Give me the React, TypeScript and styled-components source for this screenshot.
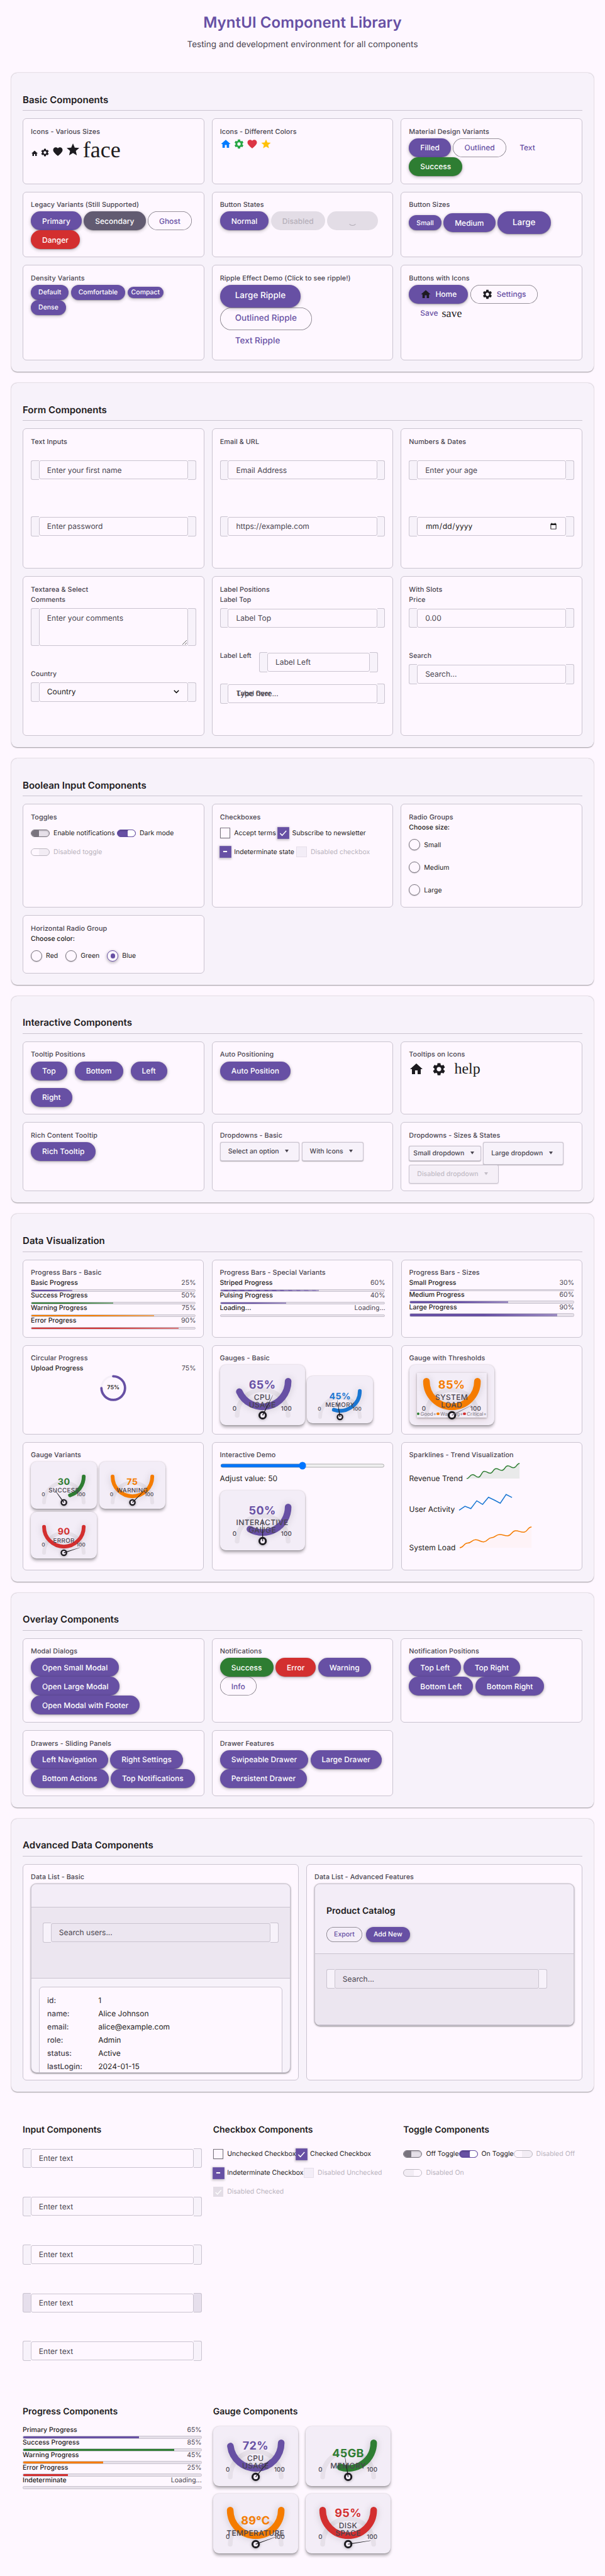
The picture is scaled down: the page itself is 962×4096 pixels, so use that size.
import React from 'react';
import styled, { createGlobalStyle, css } from 'styled-components';

const c = {
  primary: '#6750A4',
  secondary: '#625B71',
  success: '#2E7D32',
  danger: '#D32F2F',
  warning: '#F57C00',
  info: '#1976D2',
  bg: '#FEF7FF',
  surface: '#F7F2FA',
  surfaceHigh: '#F3EDF7',
  surfaceHigher: '#ECE6F0',
  track: '#E6E0E9',
  line: '#CAC4D0',
  outline: '#79747E',
  text: '#1D1B20',
  muted: '#49454F',
};
const level1 = '0 1px 2px rgba(0,0,0,.3), 0 1px 3px 1px rgba(0,0,0,.15)';
const level2 = '0 1px 2px rgba(0,0,0,.3), 0 2px 6px 2px rgba(0,0,0,.15)';

const Global = createGlobalStyle`
  html, body { margin: 0; background: ${c.bg}; overflow: hidden; }
  *, *::before, *::after { box-sizing: border-box; }
  button, input, select, textarea { font-family: inherit; }
`;

const Page = styled.div`
  zoom: 0.7513;
  width: 100%;
  height: 5452px;
  overflow: hidden;
  padding: 0 24px;
  background: ${c.bg};
  color: ${c.text};
  font-family: Inter, 'Liberation Sans', sans-serif;
  font-size: 16px;
  line-height: 20px;
  text-rendering: geometricPrecision;
`;

const Header = styled.header`
  height: 154.5px;
  padding-top: 28px;
  text-align: center;
`;
const Title = styled.h1`
  margin: 0;
  font-size: 32px;
  line-height: 40px;
  font-weight: 600;
  letter-spacing: 0.1px;
  color: ${c.primary};
`;
const Subtitle = styled.p`
  margin: 14px 0 0;
  font-size: 18px;
  line-height: 24px;
  color: ${c.muted};
`;

const Panel = styled.section`
  margin-bottom: 24px;
  padding: 24px;
  border-radius: 12px;
  background: ${c.surface};
  box-shadow: 0 1px 2px rgba(0, 0, 0, 0.3), 0 1px 3px rgba(0, 0, 0, 0.12);
`;
const PanelTitle = styled.h2`
  height: 38px;
  margin: 18px 0 16px;
  border-bottom: 1px solid ${c.line};
  font-size: 20px;
  line-height: 28px;
  font-weight: 600;
`;
const Grid = styled.div<{ $rows: string; $cols?: number }>`
  display: grid;
  grid-template-columns: repeat(${p => p.$cols ?? 3}, 1fr);
  grid-template-rows: ${p => p.$rows};
  gap: 16px;
`;
const CardBox = styled.div`
  padding: 16px;
  border: 1px solid ${c.line};
  border-radius: 8px;
  background: ${c.bg};
`;
const CardTitle = styled.h3`
  margin: 0.7px 0 4px;
  font-size: 14.4px;
  letter-spacing: 0.1px;
  line-height: 20px;
  font-weight: 500;
  color: ${c.muted};
`;
const Card = ({ title, children }: { title: string; children?: React.ReactNode }) => (
  <CardBox>
    <CardTitle>{title}</CardTitle>
    {children}
  </CardBox>
);

const Row = styled.div<{ $gap?: string; $align?: string }>`
  display: flex;
  flex-wrap: wrap;
  align-items: ${p => p.$align ?? 'center'};
  gap: ${p => p.$gap ?? '0 4.5px'};
`;

/* Buttons */
type Size = 'xs' | 's' | 'm' | 'l';
const sizes = {
  xs: css`height: 24px; padding: 0 8px; border-radius: 12px; font-size: 14px;`,
  s: css`height: 32px; padding: 0 16px; border-radius: 16px; font-size: 14px;`,
  m: css`height: 40px; padding: 0 24px; border-radius: 20px; font-size: 16px;`,
  l: css`height: 48px; padding: 0 32px; border-radius: 24px; font-size: 18px;`,
};
const Btn = styled.button<{ $size?: Size; $color?: string; $kind?: 'outlined' | 'text' | 'disabled' }>`
  display: inline-flex;
  align-items: center;
  justify-content: center;
  gap: 8px;
  border: 0;
  font-weight: 500;
  line-height: 20px;
  text-rendering: geometricPrecision;
  white-space: nowrap;
  color: #fff;
  background: ${p => p.$color ?? c.primary};
  box-shadow: ${level2};
  ${p => sizes[p.$size ?? 'm']}
  ${p => p.$kind === 'outlined' && css`background: transparent; color: ${c.primary}; box-shadow: inset 0 0 0 1px ${c.outline};`}
  ${p => p.$kind === 'text' && css`background: transparent; color: ${c.primary}; box-shadow: none;`}
  ${p => p.$kind === 'disabled' && css`background: #e3dde6; color: #b6b0ba; box-shadow: none;`}
`;
const Spinner = styled.span`
  width: 20px;
  height: 20px;
  margin: 2px 20px 0;
  border: 2px solid transparent;
  border-bottom-color: #b0abb4;
  border-radius: 50%;
`;

/* Icons */
const paths = {
  home: 'M10 20v-6h4v6h5v-8h3L12 3 2 12h3v8z',
  gear: 'M19.14 12.94c.04-.3.06-.61.06-.94 0-.32-.02-.64-.07-.94l2.03-1.58c.18-.14.23-.41.12-.61l-1.92-3.32c-.12-.22-.37-.29-.59-.22l-2.39.96c-.5-.38-1.03-.7-1.62-.94l-.36-2.54c-.04-.24-.24-.41-.48-.41h-3.84c-.24 0-.43.17-.47.41l-.36 2.54c-.59.24-1.13.57-1.62.94l-2.39-.96c-.22-.08-.47 0-.59.22L2.74 8.87c-.12.21-.08.47.12.61l2.03 1.58c-.05.3-.09.63-.09.94s.02.64.07.94l-2.03 1.58c-.18.14-.23.41-.12.61l1.92 3.32c.12.22.37.29.59.22l2.39-.96c.5.38 1.03.7 1.62.94l.36 2.54c.05.24.24.41.48.41h3.84c.24 0 .44-.17.47-.41l.36-2.54c.59-.24 1.13-.56 1.62-.94l2.39.96c.22.08.47 0 .59-.22l1.92-3.32c.12-.22.07-.47-.12-.61l-2.01-1.58zM12 15.6c-1.98 0-3.6-1.62-3.6-3.6s1.62-3.6 3.6-3.6 3.6 1.62 3.6 3.6-1.62 3.6-3.6 3.6z',
  heart: 'M12 21.35l-1.45-1.32C5.4 15.36 2 12.28 2 8.5 2 5.42 4.42 3 7.5 3c1.74 0 3.41.81 4.5 2.09C13.09 3.81 14.76 3 16.5 3 19.58 3 22 5.42 22 8.5c0 3.78-3.4 6.86-8.55 11.54L12 21.35z',
  star: 'M12 17.27L18.18 21l-1.64-7.03L22 9.24l-7.19-.61L12 2 9.19 8.63 2 9.24l5.46 4.73L5.82 21z',
};
const Icon = ({ name, size = 24, color = c.text }: { name: keyof typeof paths; size?: number; color?: string }) => (
  <svg width={size} height={size} viewBox="0 0 24 24" fill={color}><path d={paths[name]} /></svg>
);
const Ligature = styled.span<{ $size: number }>`
  font-family: 'Liberation Serif', serif;
  font-weight: 400;
  font-size: ${p => p.$size}px;
  line-height: 1;
  color: ${c.text};
`;

/* Text fields */
const Field = styled.div<{ $top?: number; $h?: number }>`
  position: relative;
  height: ${p => p.$h ?? 119}px;
  padding-top: ${p => p.$top ?? 25}px;
`;
const LabeledField = styled.div<{ $h?: number }>`
  height: ${p => p.$h ?? 119}px;
`;
const FieldLabel = styled.label`
  display: block;
  height: 25px;
  font-size: 14px;
  letter-spacing: 0.1px;
  line-height: 16px;
  font-weight: 500;
  color: ${c.muted};
`;
const LeftField = styled.div`
  display: flex;
  height: 41px;
  gap: 16.5px;
  padding-right: 15px;
`;
const OverLabel = styled.label`
  position: absolute;
  top: 37px;
  left: 36px;
  font-size: 14px;
  line-height: 18px;
  font-weight: 500;
  color: ${c.muted};
`;
const InputWrap = styled.div`
  position: relative;
  display: flex;
  align-items: center;
  flex: 1;
  min-width: 0;
`;
const Slot = styled.span<{ $side: 'left' | 'right'; $bg?: string }>`
  flex: 0 0 17px;
  align-self: stretch;
  min-height: 42px;
  border: 1px solid ${c.line};
  background: ${p => p.$bg ?? c.surface};
  ${p => p.$side === 'left'
    ? css`border-right: 0; border-radius: 4px 0 0 4px;`
    : css`border-left: 0; border-radius: 0 4px 4px 0;`}
`;
const control = css`
  flex: 1;
  min-width: 0;
  width: 0;
  height: 40px;
  margin: 0;
  padding: 0 16px;
  border: 1px solid ${c.line};
  border-radius: 4px;
  outline: 0;
  background: transparent;
  font-size: 16px;
  line-height: 24px;
  text-rendering: geometricPrecision;
  color: ${c.text};
  &::placeholder { color: ${c.muted}; opacity: 1; }
`;
const TextInput = styled.input`${control}`;
const Select = styled.select`${control} appearance: none;`;
const Chevron = styled.svg`
  position: absolute;
  right: 36px;
  top: 50%;
  margin-top: -4px;
  pointer-events: none;
`;
const TextArea = styled.textarea`${control} height: 80px; padding: 8px 16px;`;
const Wrapped = ({ slot, children }: { slot?: string; children: React.ReactNode }) => (
  <InputWrap>
    <Slot $side="left" $bg={slot} />
    {children}
    <Slot $side="right" $bg={slot} />
  </InputWrap>
);
const Box = ({ text, slot, type }: { text?: string; slot?: string; type?: string }) => (
  <Wrapped slot={slot}><TextInput placeholder={text} type={type} /></Wrapped>
);

/* Boolean inputs */
const Choice = styled.label<{ $off?: boolean }>`
  display: inline-flex;
  align-items: center;
  gap: 8px;
  height: 40px;
  font-size: 14px;
  white-space: nowrap;
  ${p => p.$off && css`color: #b9b3bd;`}
`;
const Switch = styled.span<{ $on?: boolean; $off?: boolean }>`
  display: flex;
  justify-content: ${p => (p.$on ? 'flex-end' : 'flex-start')};
  width: 40px;
  height: 16px;
  border: 2px solid ${p => (p.$off ? '#bcb7c0' : p.$on ? c.primary : c.outline)};
  border-radius: 8px;
  overflow: hidden;
  background: ${p => (p.$off ? '#f2ecf4' : p.$on ? c.primary : c.track)};
  box-shadow: ${p => (p.$off ? 'none' : 'inset 0 1px 3px rgba(0,0,0,.3)')};
  &::after {
    content: '';
    width: 16px;
    border-radius: ${p => (p.$on ? '2px 6px 6px 2px' : '6px 1px 1px 6px')};
    background: ${p => (p.$off ? c.bg : p.$on ? '#fff' : c.outline)};
  }
`;
const Check = styled.span<{ $on?: boolean; $off?: boolean }>`
  display: flex;
  align-items: center;
  justify-content: center;
  width: 22px;
  height: 22px;
  border: 2px solid ${c.outline};
  background: ${c.bg};
  box-shadow: 0 1px 2px rgba(0, 0, 0, 0.25);
  ${p => p.$on && css`border: 0; background: ${c.primary}; transform: scale(1.1); box-shadow: -1px 1px 4px 1px rgba(0, 0, 0, 0.22);`}
  ${p => p.$off && css`border-color: #e6dfea; background: #f3edf7; box-shadow: none; transform: none;`}
  ${p => p.$off && p.$on && css`background: #e3dde6;`}
`;
const Tick = () => (
  <svg width="14" height="14" viewBox="0 0 14 14" fill="none" stroke="#fff" strokeWidth="1.8"><path d="M1 8l4 4 8-9" /></svg>
);
const Dash = () => <svg width="8" height="3"><rect width="8" height="3" fill="#fff" /></svg>;
const Radio = styled.span<{ $on?: boolean }>`
  display: flex;
  align-items: center;
  justify-content: center;
  width: 24px;
  height: 24px;
  border: 2px solid ${p => (p.$on ? c.primary : c.outline)};
  border-radius: 50%;
  box-shadow: ${p => (p.$on ? '0 2px 6px 1px rgba(0,0,0,.25)' : '0 1px 2px rgba(0,0,0,.25)')};
  background: ${c.bg};
  &::after {
    content: '';
    width: 10px;
    height: 10px;
    border-radius: 50%;
    background: ${p => (p.$on ? c.primary : 'transparent')};
  }
`;
const RadioLabel = styled.div`
  margin-bottom: 8px;
  font-size: 14px;
  line-height: 16.5px;
  font-weight: 500;
`;
const Stack = styled.div<{ $gap?: number }>`
  display: flex;
  flex-direction: column;
  align-items: flex-start;
  gap: ${p => p.$gap ?? 8}px;
`;
const CheckItem = ({ label, on, dash, off }: { label: string; on?: boolean; dash?: boolean; off?: boolean }) => (
  <Choice $off={off}><Check $on={on || dash} $off={off}>{dash ? <Dash /> : on ? <Tick /> : null}</Check>{label}</Choice>
);
const ToggleItem = ({ label, on, off }: { label: string; on?: boolean; off?: boolean }) => (
  <Choice $off={off}><Switch $on={on} $off={off} />{label}</Choice>
);
const RadioItem = ({ label, on }: { label: string; on?: boolean }) => (
  <Choice><Radio $on={on} />{label}</Choice>
);

/* Dropdowns */
const DropBtn = styled.button<{ $h?: number; $pad?: number; $off?: boolean }>`
  display: inline-flex;
  align-items: center;
  gap: 8px;
  height: ${p => p.$h ?? 40}px;
  padding: 0 ${p => p.$pad ?? 16}px;
  border: 1px solid ${c.line};
  border-radius: 4px;
  background: ${c.surface};
  box-shadow: 0 1px 2px rgba(0, 0, 0, 0.3);
  font-size: 14px;
  font-weight: 500;
  text-rendering: geometricPrecision;
  color: ${c.muted};
  svg { margin: 0 5px; }
  ${p => p.$off && css`color: #c2bcc6; background: #f5eff7; box-shadow: 0 1px 2px rgba(0, 0, 0, 0.12);`}
`;
const Drop = ({ label, h, pad, off }: { label: string; h?: number; pad?: number; off?: boolean }) => (
  <DropBtn $h={h} $pad={pad} $off={off}>{label}<svg width="8" height="6" viewBox="0 0 8 6" fill="currentColor"><path d="M0 0h8L4 6z" /></svg></DropBtn>
);

/* Progress */
const ProgressHead = styled.div`
  display: flex;
  justify-content: space-between;
  height: 20.6px;
  font-size: 14px;
  line-height: 16.5px;
  b { font-weight: 500; }
  span { color: ${c.muted}; }
`;
const Bar = styled.div<{ $h: number }>`
  height: ${p => p.$h}px;
  border: 1px solid ${c.line};
  border-radius: 3px;
  overflow: hidden;
  background: ${c.track};
`;
const Fill = styled.div<{ $color: string; $striped?: boolean; $flat?: boolean }>`
  height: 100%;
  background: ${p => p.$striped ? 'repeating-linear-gradient(45deg, rgba(255,255,255,.18) 0 6px, transparent 6px 12px), ' : ''}
    linear-gradient(90deg, ${p => p.$color} 50%, ${p => (p.$flat ? p.$color : p.$color + '99')});
`;
const Progress = ({ label, value, color = c.primary, h = 6, striped, flat }: { label: string; value?: number; color?: string; h?: number; striped?: boolean; flat?: boolean }) => (
  <div>
    <ProgressHead><b>{label}</b><span>{value === undefined ? 'Loading...' : `${value}%`}</span></ProgressHead>
    <Bar $h={h}>{value !== undefined && <Fill $color={color} $striped={striped} $flat={flat} style={{ width: `${value}%` }} />}</Bar>
  </div>
);
const Circle = styled.div`
  position: relative;
  display: grid;
  place-items: center;
  width: 56px;
  height: 56px;
  margin: 0 auto;
  font-size: 12px;
  font-weight: 600;
  svg { position: absolute; inset: 0; }
`;

/* Gauges */
const GaugeBox = styled.div<{ $small?: boolean; $mb: number }>`
  position: relative;
  flex: none;
  width: ${p => (p.$small ? 140 : 180)}px;
  height: ${p => (p.$small ? 98.7 : 126.5)}px;
  margin-bottom: ${p => p.$mb}px;
  border-radius: 12px;
  background: ${c.surfaceHigh};
  box-shadow: 0 1px 3px rgba(0, 0, 0, 0.2), 0 4px 6px rgba(0, 0, 0, 0.25);
  > svg { position: absolute; inset: 0; }
`;
const GaugeInner = styled.div`
  position: absolute;
  inset: 16px;
  box-shadow: 0 1px 4px rgba(0, 0, 0, 0.3), 0 4px 12px rgba(120, 60, 40, 0.14);
`;
const GaugeText = styled.div<{ $small?: boolean; $color: string }>`
  position: absolute;
  left: -10px;
  right: -10px;
  bottom: ${p => (p.$small ? 30.7 : 34.5)}px;
  text-align: center;
  text-transform: uppercase;
  font-size: ${p => (p.$small ? 13 : 16)}px;
  line-height: ${p => (p.$small ? 13 : 16)}px;
  font-weight: 500;
  letter-spacing: 0.5px;
  color: ${c.muted};
  strong {
    display: block;
    margin-bottom: ${p => (p.$small ? 3.5 : 5)}px;
    font-size: ${p => (p.$small ? 19 : 24)}px;
    line-height: ${p => (p.$small ? 18 : 24)}px;
    font-weight: 700;
    color: ${p => p.$color};
  }
  span { display: block; white-space: nowrap; }
`;
const Tiny = styled.span<{ $x: number; $y: number; $small?: boolean }>`
  position: absolute;
  left: ${p => p.$x}px;
  top: ${p => p.$y}px;
  transform: translate(-50%, -50%);
  font-size: ${p => (p.$small ? 11 : 13)}px;
  letter-spacing: 0.2px;
  font-weight: 500;
  line-height: 1;
  color: ${c.muted};
`;
const Legend = styled.div`
  position: absolute;
  left: 16px;
  right: 16px;
  top: 96px;
  display: flex;
  justify-content: space-between;
  font-size: 10.5px;
  line-height: 14px;
  color: ${c.outline};
`;
const LegendItem = styled.span<{ $color: string }>`
  display: flex;
  align-items: center;
  gap: 2px;
  &::before {
    content: '';
    width: 6px;
    height: 6px;
    border-radius: 50%;
    background: ${p => p.$color};
  }
`;
type GaugeProps = { value: number; unit?: string; label: string[]; color?: string; small?: boolean; legend?: boolean; mb?: number };
const Gauge = ({ value, unit = '', label, color = c.primary, small, legend, mb = 0 }: GaugeProps) => {
  const w = small ? 140 : 180;
  const h = small ? 98.7 : 126.5;
  const cx = w / 2;
  const r = small ? 42 : 54;
  const hubY = small ? 86.5 : 107;
  const arcY = small ? 31.5 : 35;
  const a = (Math.min(180, value * 2.4) * Math.PI) / 180;
  const turn = (value - 50) * 1.8;
  const len = small ? 36 : 48;
  return (
    <GaugeBox $small={small} $mb={mb}>
      {legend && <GaugeInner />}
      <svg width={w} height={h} viewBox={`0 0 ${w} ${h}`} fill="none" strokeLinecap="round">
        <path d={`M${cx - r} ${hubY}a${r} ${r} 0 0 1 ${2 * r} 0`} stroke={c.track} strokeWidth={small ? 8 : 10} />
        <path
          d={`M${cx + r} ${arcY}A${r} ${r} 0 0 1 ${cx + r * Math.cos(a)} ${arcY + r * Math.sin(a)}`}
          stroke={color}
          strokeWidth={small ? 8 : 14}
          filter="drop-shadow(0 0 8px rgba(0,0,0,.16))"
        />
      </svg>
      <GaugeText $small={small} $color={color}>
        <strong>{value}{unit}</strong>
        {label.map(l => <span key={l}>{l}</span>)}
      </GaugeText>
      <Tiny $small={small} $x={small ? 26.6 : 31.3} $y={small ? 68.5 : 93.2}>0</Tiny>
      <Tiny $small={small} $x={small ? 106 : 140.8} $y={small ? 68.5 : 93.2}>100</Tiny>
      {legend && (
        <Legend>
          <LegendItem $color={c.success}>Good+</LegendItem>
          <LegendItem $color={c.warning}>Warning+</LegendItem>
          <LegendItem $color={c.danger}>Critical+</LegendItem>
        </Legend>
      )}
      <svg width={w} height={h} viewBox={`0 0 ${w} ${h}`}>
        <circle cx={cx} cy={hubY} r={small ? 5.4 : 6.8} fill={c.surfaceHigh} stroke={c.text} strokeWidth={small ? 3.2 : 4} filter="drop-shadow(0 1px 3px rgba(0,0,0,.3))" />
        <path
          d={`M${cx - 1} ${hubY}L${cx - 0.2} ${hubY - len}h.4L${cx + 1} ${hubY}z`}
          fill={legend ? c.outline : c.text}
          transform={`rotate(${turn} ${cx} ${hubY})`}
        />
      </svg>
    </GaugeBox>
  );
};

const Range = styled.input`
  display: block;
  width: 350px;
  height: 16px;
  margin: 2px 0 8px;
`;
const RangeLabel = styled.div`
  height: 37px;
  line-height: 20px;
`;

/* Sparklines */
const SparkRow = styled.div<{ $mt?: number }>`
  display: flex;
  align-items: baseline;
  gap: 4.5px;
  margin-top: ${p => p.$mt ?? 0}px;
`;
const smooth = (pts: number[][]) =>
  pts.map(([x, y], i) => {
    if (!i) return `M${x} ${y}`;
    const [px, py] = pts[i - 1];
    const m = (px + x) / 2;
    return `C${m} ${py} ${m} ${y} ${x} ${y}`;
  }).join('');
type SparkProps = { w: number; h: number; ys: number[]; color: string; curved?: boolean; fill?: number };
const Spark = ({ w, h, ys, color, curved, fill }: SparkProps) => {
  const pts = ys.map((y, i) => [4 + (i * (w - 8)) / (ys.length - 1), y]);
  const d = curved ? smooth(pts) : 'M' + pts.map(p => p.join(' ')).join('L');
  return (
    <svg width={w} height={h} viewBox={`0 0 ${w} ${h}`} fill="none">
      {fill && <path d={`${d}V${ys[0]}H4z`} fill={color} opacity={fill} />}
      <path d={d} stroke={color} strokeWidth="2" />
    </svg>
  );
};

/* Data lists */
const ListBox = styled.div<{ $h: number }>`
  height: ${p => p.$h}px;
  border: 1px solid ${c.line};
  border-radius: 12px;
  overflow: hidden;
  background: ${c.surface};
  box-shadow: ${level1};
`;
const ListHead = styled.div<{ $h: number }>`
  height: ${p => p.$h}px;
  padding: 42px 24px 0;
  background: ${c.surfaceHigh};
  border-bottom: 1px solid ${c.line};
`;
const ListTitle = styled.h3`
  margin: 0 0 20px;
  font-size: 18.72px;
  line-height: 28px;
  font-weight: 600;
`;
const ListSearch = styled.div<{ $right?: number }>`
  height: 151px;
  padding: 32px ${p => p.$right ?? 24}px 0 24px;
  background: ${c.surfaceHigher};
  border-bottom: 1px solid ${c.line};
`;
const Record = styled.dl`
  display: grid;
  grid-template-columns: 92px 1fr;
  grid-auto-rows: 20px;
  gap: 8px 16px;
  height: 220px;
  margin: 16px;
  padding: 18px 16px;
  border: 1px solid ${c.line};
  border-radius: 8px;
  background: ${c.bg};
  font-size: 16px;
  dt { color: ${c.muted}; font-weight: 500; }
  dd { margin: 0; }
`;

/* Unboxed groups at the end of the page */
const Loose = styled.section`
  display: grid;
  grid-template-columns: repeat(3, 1fr);
  column-gap: 24px;
  row-gap: 22.5px;
  padding: 24px;
`;
const LooseTitle = styled.h3`
  margin: 19px 0 17px;
  font-size: 18.72px;
  line-height: 28px;
  font-weight: 600;
`;
const GaugeGrid = styled.div`
  display: grid;
  grid-template-columns: 180px 180px;
  gap: 16px;
`;

const record = [
  ['id:', '1'],
  ['name:', 'Alice Johnson'],
  ['email:', 'alice@example.com'],
  ['role:', 'Admin'],
  ['status:', 'Active'],
  ['lastLogin:', '2024-01-15'],
];

export default function App() {
  return (
    <>
      <Global />
      <Page>
        <Header>
          <Title>MyntUI Component Library</Title>
          <Subtitle>Testing and development environment for all components</Subtitle>
        </Header>

        <Panel>
          <PanelTitle>Basic Components</PanelTitle>
          <Grid $rows="139px 139px 202.5px">
            <Card title="Icons - Various Sizes">
              <Row $align="baseline">
                <Icon name="home" size={16} /><Icon name="gear" size={20} /><Icon name="heart" /><Icon name="star" size={32} />
                <Ligature $size={48}>face</Ligature>
              </Row>
            </Card>
            <Card title="Icons - Different Colors">
              <Row>
                <Icon name="home" color="#007bff" /><Icon name="gear" color="#28a745" />
                <Icon name="heart" color="#dc3545" /><Icon name="star" color="#ffc107" />
              </Row>
            </Card>
            <Card title="Material Design Variants">
              <Row><Btn>Filled</Btn><Btn $kind="outlined">Outlined</Btn><Btn $kind="text">Text</Btn><Btn $color={c.success}>Success</Btn></Row>
            </Card>
            <Card title="Legacy Variants (Still Supported)">
              <Row><Btn>Primary</Btn><Btn $color={c.secondary}>Secondary</Btn><Btn $kind="outlined">Ghost</Btn><Btn $color={c.danger}>Danger</Btn></Row>
            </Card>
            <Card title="Button States">
              <Row><Btn>Normal</Btn><Btn $kind="disabled">Disabled</Btn><Btn $kind="disabled"><Spinner /></Btn></Row>
            </Card>
            <Card title="Button Sizes">
              <Row><Btn $size="s">Small</Btn><Btn>Medium</Btn><Btn $size="l">Large</Btn></Row>
            </Card>
            <Card title="Density Variants">
              <Row><Btn $size="s">Default</Btn><Btn $size="s">Comfortable</Btn><Btn $size="xs">Compact</Btn><Btn $size="s">Dense</Btn></Row>
            </Card>
            <Card title="Ripple Effect Demo (Click to see ripple!)">
              <Stack $gap={0}><Btn $size="l">Large Ripple</Btn><Btn $size="l" $kind="outlined">Outlined Ripple</Btn><Btn $size="l" $kind="text">Text Ripple</Btn></Stack>
            </Card>
            <Card title="Buttons with Icons">
              <Row>
                <Btn><Icon name="home" />Home</Btn>
                <Btn $kind="outlined"><Icon name="gear" />Settings</Btn>
                <Btn $kind="text">Save<Ligature $size={24}>save</Ligature></Btn>
              </Row>
            </Card>
          </Grid>
        </Panel>

        <Panel>
          <PanelTitle>Form Components</PanelTitle>
          <Grid $rows="297px 337.5px">
            <Card title="Text Inputs">
              <Field><Box text="Enter your first name" /></Field>
              <Field><Box text="Enter password" type="password" /></Field>
            </Card>
            <Card title="Email & URL">
              <Field><Box text="Email Address" /></Field>
              <Field><Box text="https://example.com" /></Field>
            </Card>
            <Card title="Numbers & Dates">
              <Field><Box text="Enter your age" /></Field>
              <Field><Box type="date" /></Field>
            </Card>
            <Card title="Textarea & Select">
              <LabeledField $h={157}><FieldLabel>Comments</FieldLabel><Wrapped><TextArea placeholder="Enter your comments" /></Wrapped></LabeledField>
              <LabeledField>
                <FieldLabel>Country</FieldLabel>
                <Wrapped>
                  <Select defaultValue="c"><option value="c">Country</option></Select>
                  <Chevron width="12" height="8" viewBox="0 0 12 8" fill="none" stroke="#000" strokeWidth="2"><path d="M1 1l5 5 5-5" /></Chevron>
                </Wrapped>
              </LabeledField>
            </Card>
            <Card title="Label Positions">
              <LabeledField><FieldLabel>Label Top</FieldLabel><Box text="Label Top" /></LabeledField>
              <LeftField><FieldLabel>Label Left</FieldLabel><Box text="Label Left" /></LeftField>
              <Field><Box text="Type here..." /><OverLabel>Label Over</OverLabel></Field>
            </Card>
            <Card title="With Slots">
              <LabeledField><FieldLabel>Price</FieldLabel><Box text="0.00" /></LabeledField>
              <LabeledField><FieldLabel>Search</FieldLabel><Box text="Search..." /></LabeledField>
            </Card>
          </Grid>
        </Panel>

        <Panel>
          <PanelTitle>Boolean Input Components</PanelTitle>
          <Grid $rows="219.5px 123.5px">
            <Card title="Toggles">
              <Row><ToggleItem label="Enable notifications" /><ToggleItem on label="Dark mode" /><ToggleItem off label="Disabled toggle" /></Row>
            </Card>
            <Card title="Checkboxes">
              <Row>
                <CheckItem label="Accept terms" /><CheckItem on label="Subscribe to newsletter" />
                <CheckItem dash label="Indeterminate state" /><CheckItem off label="Disabled checkbox" />
              </Row>
            </Card>
            <Card title="Radio Groups">
              <RadioLabel>Choose size:</RadioLabel>
              <Stack><RadioItem label="Small" /><RadioItem label="Medium" /><RadioItem label="Large" /></Stack>
            </Card>
            <Card title="Horizontal Radio Group">
              <RadioLabel>Choose color:</RadioLabel>
              <Row $gap="16px"><RadioItem label="Red" /><RadioItem label="Green" /><RadioItem on label="Blue" /></Row>
            </Card>
          </Grid>
        </Panel>

        <Panel>
          <PanelTitle>Interactive Components</PanelTitle>
          <Grid $rows="154.5px 147px">
            <Card title="Tooltip Positions"><Row $gap="16px"><Btn>Top</Btn><Btn>Bottom</Btn><Btn>Left</Btn><Btn>Right</Btn></Row></Card>
            <Card title="Auto Positioning"><Row><Btn>Auto Position</Btn></Row></Card>
            <Card title="Tooltips on Icons">
              <Row $gap="16px"><Icon name="home" size={32} /><Icon name="gear" size={32} /><Ligature $size={32}>help</Ligature></Row>
            </Card>
            <Card title="Rich Content Tooltip"><Row><Btn>Rich Tooltip</Btn></Row></Card>
            <Card title="Dropdowns - Basic"><Row><Drop label="Select an option" /><Drop label="With Icons" /></Row></Card>
            <Card title="Dropdowns - Sizes & States">
              <Row><Drop label="Small dropdown" h={32} pad={8} /><Drop label="Large dropdown" h={48} /><Drop label="Disabled dropdown" off /></Row>
            </Card>
          </Grid>
        </Panel>

        <Panel>
          <PanelTitle>Data Visualization</PanelTitle>
          <Grid $rows="165.5px 189px 271px">
            <Card title="Progress Bars - Basic">
              <Progress label="Basic Progress" value={25} />
              <Progress label="Success Progress" value={50} color={c.success} />
              <Progress label="Warning Progress" value={75} color={c.warning} />
              <Progress label="Error Progress" value={90} color={c.danger} />
            </Card>
            <Card title="Progress Bars - Special Variants">
              <Progress label="Striped Progress" value={60} striped />
              <Progress label="Pulsing Progress" value={40} />
              <Progress label="Loading..." />
            </Card>
            <Card title="Progress Bars - Sizes">
              <Progress label="Small Progress" value={30} h={4} />
              <Progress label="Medium Progress" value={60} />
              <Progress label="Large Progress" value={90} h={8} />
            </Card>
            <Card title="Circular Progress">
              <ProgressHead><b>Upload Progress</b><span>75%</span></ProgressHead>
              <Circle>
                <svg width="56" height="56" viewBox="0 0 56 56" fill="none">
                  <circle cx="28" cy="28" r="25" stroke="#f5eff8" strokeWidth="4" />
                  <path d="M28 3a25 25 0 1 1-25 25" stroke={c.primary} strokeWidth="5" strokeLinecap="round" />
                </svg>
                75%
              </Circle>
            </Card>
            <Card title="Gauges - Basic">
              <Row $align="flex-end">
                <Gauge value={65} unit="%" label={['CPU', 'Usage']} />
                <Gauge small value={45} unit="%" label={['Memory']} color={c.info} mb={4} />
              </Row>
            </Card>
            <Card title="Gauge with Thresholds"><Gauge value={85} unit="%" label={['System', 'Load']} color={c.warning} legend /></Card>
            <Card title="Gauge Variants">
              <Row>
                <Gauge small value={30} label={['Success']} color={c.success} mb={7.5} />
                <Gauge small value={75} label={['Warning']} color={c.warning} mb={7.5} />
                <Gauge small value={90} label={['Error']} color={c.danger} />
              </Row>
            </Card>
            <Card title="Interactive Demo">
              <Range type="range" defaultValue={50} />
              <RangeLabel>Adjust value: 50</RangeLabel>
              <Gauge value={50} unit="%" label={['Interactive', 'Gauge']} />
            </Card>
            <Card title="Sparklines - Trend Visualization">
              <SparkRow>Revenue Trend<Spark w={120} h={40} curved fill={0.1} color={c.success} ys={[36, 27.5, 33, 20.5, 24.5, 15, 18.5, 9, 13, 4]} /></SparkRow>
              <SparkRow $mt={22}>User Activity<Spark w={120} h={40} color={c.info} ys={[36.5, 28, 33, 16.5, 24, 9, 15, 21.5, 3, 9.5]} /></SparkRow>
              <SparkRow $mt={24}>System Load<Spark w={160} h={53} curved fill={0.03} color={c.warning} ys={[48, 38, 31, 35.5, 26.5, 20, 22.5, 12, 15, 4]} /></SparkRow>
            </Card>
          </Grid>
        </Panel>

        <Panel>
          <PanelTitle>Overlay Components</PanelTitle>
          <Grid $rows="179px 139px">
            <Card title="Modal Dialogs"><Stack $gap={0}><Btn>Open Small Modal</Btn><Btn>Open Large Modal</Btn><Btn>Open Modal with Footer</Btn></Stack></Card>
            <Card title="Notifications">
              <Row><Btn $color={c.success}>Success</Btn><Btn $color={c.danger}>Error</Btn><Btn>Warning</Btn><Btn $kind="outlined">Info</Btn></Row>
            </Card>
            <Card title="Notification Positions"><Row><Btn>Top Left</Btn><Btn>Top Right</Btn><Btn>Bottom Left</Btn><Btn>Bottom Right</Btn></Row></Card>
            <Card title="Drawers - Sliding Panels"><Row><Btn>Left Navigation</Btn><Btn>Right Settings</Btn><Btn>Bottom Actions</Btn><Btn>Top Notifications</Btn></Row></Card>
            <Card title="Drawer Features"><Row><Btn>Swipeable Drawer</Btn><Btn>Large Drawer</Btn><Btn>Persistent Drawer</Btn></Row></Card>
          </Grid>
        </Panel>

        <Panel>
          <PanelTitle>Advanced Data Components</PanelTitle>
          <Grid $cols={2} $rows="458px">
            <Card title="Data List - Basic">
              <ListBox $h={400}>
                <ListHead $h={49} />
                <ListSearch><Box text="Search users..." /></ListSearch>
                <Record>{record.map(([k, v]) => <React.Fragment key={k}><dt>{k}</dt><dd>{v}</dd></React.Fragment>)}</Record>
              </ListBox>
            </Card>
            <Card title="Data List - Advanced Features">
              <ListBox $h={300}>
                <ListHead $h={147}>
                  <ListTitle>Product Catalog</ListTitle>
                  <Row $gap="8px"><Btn $size="s" $kind="outlined">Export</Btn><Btn $size="s">Add New</Btn></Row>
                </ListHead>
                <ListSearch $right={56}><Box text="Search..." /></ListSearch>
              </ListBox>
            </Card>
          </Grid>
        </Panel>

        <Loose>
          <div>
            <LooseTitle>Input Components</LooseTitle>
            {[0, 1, 2, 3, 4].map(i => (
              <Field key={i} $top={8} $h={102}><Box text="Enter text" slot={i === 3 ? '#e6dfec' : undefined} /></Field>
            ))}
          </div>
          <div>
            <LooseTitle>Checkbox Components</LooseTitle>
            <Row $gap="0">
              <CheckItem label="Unchecked Checkbox" /><CheckItem on label="Checked Checkbox" />
              <CheckItem dash label="Indeterminate Checkbox" /><CheckItem off label="Disabled Unchecked" />
              <CheckItem on off label="Disabled Checked" />
            </Row>
          </div>
          <div>
            <LooseTitle>Toggle Components</LooseTitle>
            <Row $gap="0">
              <ToggleItem label="Off Toggle" /><ToggleItem on label="On Toggle" />
              <ToggleItem off label="Disabled Off" /><ToggleItem on off label="Disabled On" />
            </Row>
          </div>
          <div>
            <LooseTitle>Progress Components</LooseTitle>
            <Progress flat label="Primary Progress" value={65} />
            <Progress flat label="Success Progress" value={85} color={c.success} />
            <Progress flat label="Warning Progress" value={45} color={c.warning} />
            <Progress flat label="Error Progress" value={25} color={c.danger} />
            <Progress label="Indeterminate" />
          </div>
          <div>
            <LooseTitle>Gauge Components</LooseTitle>
            <GaugeGrid>
              <Gauge value={72} unit="%" label={['CPU', 'Usage']} />
              <Gauge value={45} unit="GB" label={['Memory']} color={c.success} />
              <Gauge value={89} unit="°C" label={['Temperature']} color={c.warning} />
              <Gauge value={95} unit="%" label={['Disk', 'Space']} color={c.danger} />
            </GaugeGrid>
          </div>
        </Loose>
      </Page>
    </>
  );
}
